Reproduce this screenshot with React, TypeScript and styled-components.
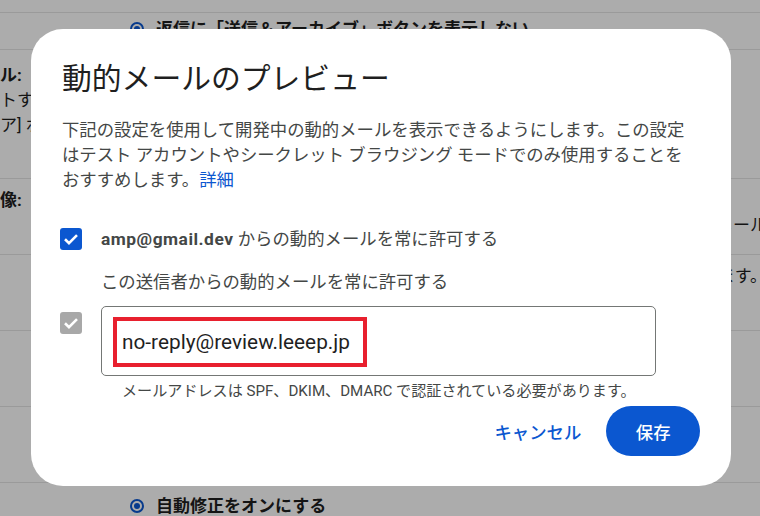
import React from "react";
import styled, { createGlobalStyle } from "styled-components";

const GlobalStyle = createGlobalStyle`
  html, body {
    margin: 0;
    padding: 0;
    overflow: hidden;
    background: #ffffff;
  }
  body {
    font-family: Roboto, "Noto Sans CJK JP", sans-serif;
  }
`;

const Page = styled.div`
  width: 760px;
  height: 516px;
  overflow: hidden;
  color: #1f1f1f;
`;

const TopGap = styled.div`
  height: 12px;
`;

const Row = styled.div<{ $h?: number; $pad: number }>`
  display: grid;
  grid-template-columns: 130px 1fr;
  box-sizing: border-box;
  height: ${(p) => (p.$h ? `${p.$h}px` : "auto")};
  padding-top: ${(p) => p.$pad}px;
  border-top: 1px solid #e4e4e4;
  font-size: 17px;
  line-height: 25px;
`;

const Label = styled.div`
  white-space: nowrap;
`;

const Line = styled.div<{ $bold?: boolean }>`
  font-weight: ${(p) => (p.$bold ? 700 : 400)};
  white-space: nowrap;
`;

const Tail = styled.div`
  display: flex;
  justify-content: flex-end;
  margin-right: -7px;
  white-space: nowrap;
  overflow: hidden;
`;

const Option = styled.div<{ $shift?: number }>`
  display: flex;
  align-items: center;
  gap: 12px;
  margin-top: ${(p) => p.$shift ?? 0}px;
  font-weight: 700;
  line-height: 23px;
  white-space: nowrap;
`;

const Radio = styled.span`
  width: 14px;
  height: 14px;
  box-sizing: border-box;
  border: 2px solid #0b57d0;
  border-radius: 50%;
  display: flex;
  align-items: center;
  justify-content: center;
  flex: none;
  &::after {
    content: "";
    width: 6px;
    height: 6px;
    border-radius: 50%;
    background: #0b57d0;
  }
`;

const Scrim = styled.div`
  position: fixed;
  inset: 0;
  background: rgba(0, 0, 0, 0.325);
  display: flex;
  align-items: center;
  justify-content: center;
`;

const Dialog = styled.div`
  width: 700px;
  margin: -1px 0 0 2px;
  box-sizing: border-box;
  padding: 30px 31px;
  background: #ffffff;
  border-radius: 32px;
  color: #444746;
`;

const Title = styled.h1`
  margin: 0;
  font-size: 29.8px;
  font-weight: 400;
  line-height: 40px;
  color: #1f1f1f;
`;

const Body = styled.p`
  margin: 19px 0 0;
  max-width: 628px;
  font-size: 17.36px;
  line-height: 24.8px;
`;

const Link = styled.a`
  color: #0b57d0;
  text-decoration: none;
`;

const CheckRow = styled.div`
  display: flex;
  align-items: center;
  gap: 19px;
  height: 49.6px;
  margin: 22px 0 0 -2px;
  font-size: 17.36px;
  line-height: 24.8px;
  strong {
    letter-spacing: 0.5px;
  }
`;

const Box = styled.span<{ $color: string; $top?: number }>`
  width: 22px;
  height: 22px;
  flex: none;
  border-radius: 3px;
  background: ${(p) => p.$color};
  margin-top: ${(p) => p.$top ?? 0}px;
  display: flex;
  align-items: center;
  justify-content: center;
`;

const Sender = styled.div`
  margin: 6px 0 0 39px;
  font-size: 17.36px;
  line-height: 24.8px;
`;

const FieldRow = styled.div`
  display: flex;
  align-items: flex-start;
  gap: 19px;
  margin: 11.4px 0 0 -2px;
`;

const Field = styled.div`
  width: 555px;
  height: 70px;
  box-sizing: border-box;
  border: 1px solid #747775;
  border-radius: 5px;
  padding: 10px 11px;
`;

const Marked = styled.span`
  display: inline-block;
  box-sizing: border-box;
  height: 50px;
  border: 4px solid #e8202e;
  padding: 0 13px 0 5px;
  font-size: 20.8px;
  line-height: 42px;
  color: #1f1f1f;
`;

const Helper = styled.div`
  margin: 5px 0 0 60px;
  font-size: 15.1px;
  line-height: 20px;
`;

const Actions = styled.div`
  display: flex;
  justify-content: flex-end;
  gap: 10px;
  margin-top: 5px;
`;

const Button = styled.button<{ $filled?: boolean }>`
  height: 49.6px;
  border: 0;
  border-radius: 25px;
  padding: 0 ${(p) => (p.$filled ? 29.5 : 15)}px;
  font-family: inherit;
  font-size: 17.36px;
  font-weight: 500;
  background: ${(p) => (p.$filled ? "#0b57d0" : "transparent")};
  color: ${(p) => (p.$filled ? "#ffffff" : "#0b57d0")};
`;

function Check() {
  return (
    <svg width="22" height="22" viewBox="0 0 22 22">
      <path
        d="M5 11.3 L9 15.2 L17 7.2"
        fill="none"
        stroke="#ffffff"
        strokeWidth="2.6"
      />
    </svg>
  );
}

export default function App() {
  return (
    <>
      <GlobalStyle />
      <Page>
        <TopGap />
        <Row $h={37} $pad={0}>
          <Label />
          <Option $shift={-4}>
            <Radio />
            返信に「送信＆アーカイブ」ボタンを表示しない
          </Option>
        </Row>
        <Row $h={129} $pad={12.5}>
          <Label>
            <Line $bold>ル:</Line>
            <Line>トする</Line>
            <Line>ア] ボ</Line>
          </Label>
          <div />
        </Row>
        <Row $h={76} $pad={9}>
          <Label>
            <Line $bold>像:</Line>
          </Label>
          <div>
            <Line>外部画像を常に表示する</Line>
            <Tail>動的メール</Tail>
          </div>
        </Row>
        <Row $h={76} $pad={8.5}>
          <Label />
          <Tail>表示します。</Tail>
        </Row>
        <Row $h={76} $pad={0} />
        <Row $h={76} $pad={0} />
        <Row $pad={11.5}>
          <Label />
          <Option>
            <Radio />
            自動修正をオンにする
          </Option>
        </Row>
      </Page>

      <Scrim>
        <Dialog>
          <Title>動的メールのプレビュー</Title>
          <Body>
            下記の設定を使用して開発中の動的メールを表示できるようにします。この設定はテスト
            アカウントやシークレット ブラウジング
            モードでのみ使用することをおすすめします。<Link href="#">詳細</Link>
          </Body>
          <CheckRow>
            <Box $color="#0b57d0">
              <Check />
            </Box>
            <span>
              <strong>amp@gmail.dev</strong> からの動的メールを常に許可する
            </span>
          </CheckRow>
          <Sender>この送信者からの動的メールを常に許可する</Sender>
          <FieldRow>
            <Box $color="#a8a8a8" $top={6}>
              <Check />
            </Box>
            <Field>
              <Marked>no-reply@review.leeep.jp</Marked>
            </Field>
          </FieldRow>
          <Helper>
            メールアドレスは SPF、DKIM、DMARC で認証されている必要があります。
          </Helper>
          <Actions>
            <Button>キャンセル</Button>
            <Button $filled>保存</Button>
          </Actions>
        </Dialog>
      </Scrim>
    </>
  );
}
